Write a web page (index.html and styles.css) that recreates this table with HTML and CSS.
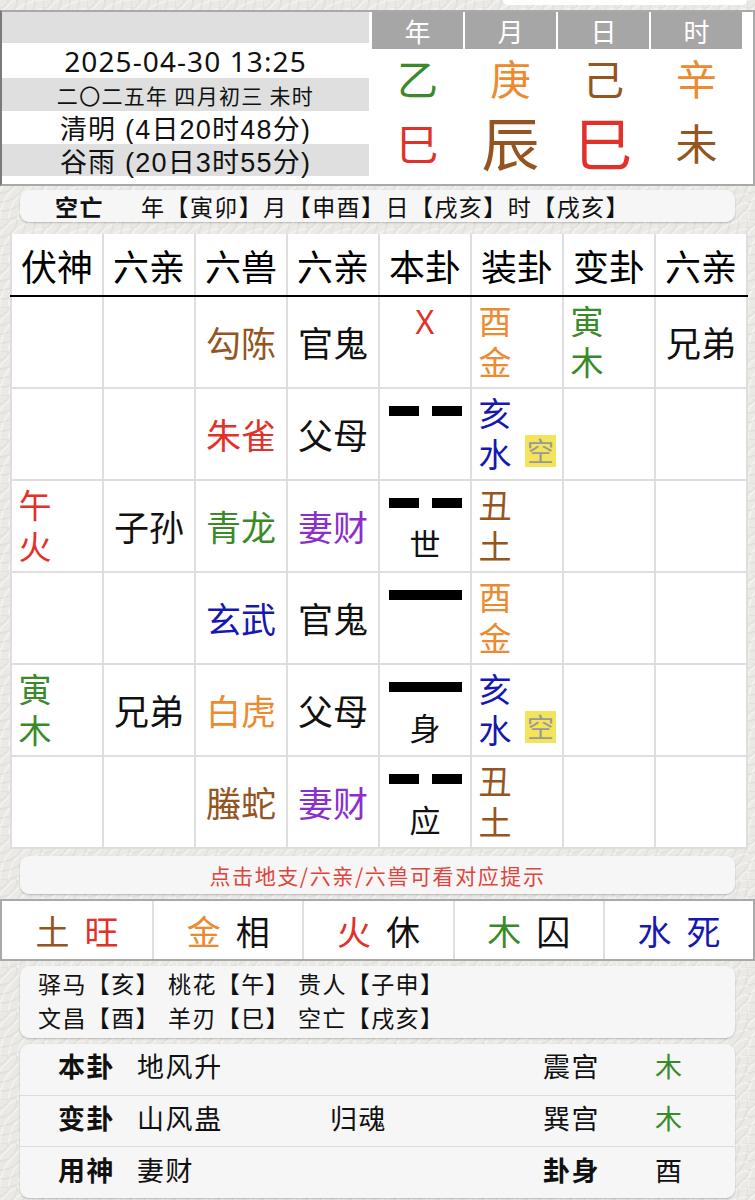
FILE: index.html
```html
<!DOCTYPE html>
<html lang="zh">
<head>
<meta charset="utf-8">
<link rel="stylesheet" href="styles.css">
</head>
<body>
<div class="strip"><div class="peek"></div></div>
<section class="top">
  <div class="info">
    <div class="irow gray bar"></div>
    <div class="irow date">2025-04-30 13:25</div>
    <div class="irow gray lunar">二〇二五年 四月初三 未时</div>
    <div class="irow term">清明 (4日20时48分)</div>
    <div class="irow gray term">谷雨 (20日3时55分)</div>
  </div>
  <div class="pillars">
    <div class="phead"><span>年</span><span>月</span><span>日</span><span>时</span></div>
    <div class="prow stems"><span class="c-green">乙</span><span class="c-orange">庚</span><span class="c-brown">己</span><span class="c-orange">辛</span></div>
    <div class="prow branches"><span class="c-red">巳</span><span class="c-brown big">辰</span><span class="c-red big">巳</span><span class="c-brown">未</span></div>
  </div>
</section>

<div class="card kong"><b>空亡</b><span>年【寅卯】月【申酉】日【戌亥】时【戌亥】</span></div>

<table class="gua">
  <colgroup><col><col><col><col><col><col><col><col></colgroup>
  <thead>
    <tr><th>伏神</th><th>六亲</th><th class="bl">六兽</th><th class="bl">六亲</th><th>本卦</th><th>装卦</th><th class="bl">变卦</th><th>六亲</th></tr>
  </thead>
  <tbody>
    <tr>
      <td></td><td></td>
      <td class="bl c-brown">勾陈</td>
      <td class="bl">官鬼</td>
      <td class="yao"><div class="x">X</div></td>
      <td class="zhuang"><div class="stack c-orange">酉金</div></td>
      <td class="bl side"><div class="stack c-green">寅木</div></td>
      <td>兄弟</td>
    </tr>
    <tr>
      <td></td><td></td>
      <td class="bl c-red">朱雀</td>
      <td class="bl">父母</td>
      <td class="yao"><div class="yin"><i></i><i></i></div></td>
      <td class="zhuang"><div class="zwrap"><div class="stack c-blue">亥水</div><span class="empty">空</span></div></td>
      <td class="bl"></td>
      <td></td>
    </tr>
    <tr>
      <td class="side"><div class="stack c-red">午火</div></td>
      <td>子孙</td>
      <td class="bl c-green">青龙</td>
      <td class="bl c-purple">妻财</td>
      <td class="yao"><div class="yin"><i></i><i></i></div><div class="mark">世</div></td>
      <td class="zhuang"><div class="stack c-brown">丑土</div></td>
      <td class="bl"></td>
      <td></td>
    </tr>
    <tr>
      <td></td><td></td>
      <td class="bl c-blue">玄武</td>
      <td class="bl">官鬼</td>
      <td class="yao"><div class="yang"></div></td>
      <td class="zhuang"><div class="stack c-orange">酉金</div></td>
      <td class="bl"></td>
      <td></td>
    </tr>
    <tr>
      <td class="side"><div class="stack c-green">寅木</div></td>
      <td>兄弟</td>
      <td class="bl c-orange">白虎</td>
      <td class="bl">父母</td>
      <td class="yao"><div class="yang"></div><div class="mark">身</div></td>
      <td class="zhuang"><div class="zwrap"><div class="stack c-blue">亥水</div><span class="empty">空</span></div></td>
      <td class="bl"></td>
      <td></td>
    </tr>
    <tr>
      <td></td><td></td>
      <td class="bl c-brown">螣蛇</td>
      <td class="bl c-purple">妻财</td>
      <td class="yao"><div class="yin"><i></i><i></i></div><div class="mark">应</div></td>
      <td class="zhuang"><div class="stack c-brown">丑土</div></td>
      <td class="bl"></td>
      <td></td>
    </tr>
  </tbody>
</table>

<div class="card hint">点击地支/六亲/六兽可看对应提示</div>

<div class="wuxing">
  <div class="wx"><span class="c-brown">土</span><span class="c-red">旺</span></div>
  <div class="wx"><span class="c-orange">金</span><span>相</span></div>
  <div class="wx"><span class="c-red">火</span><span>休</span></div>
  <div class="wx"><span class="c-green">木</span><span>囚</span></div>
  <div class="wx"><span class="c-blue">水</span><span class="c-blue">死</span></div>
</div>

<div class="card shensha">
  <div class="ssrow"><span>驿马【亥】</span><span>桃花【午】</span><span>贵人【子申】</span></div>
  <div class="ssrow"><span>文昌【酉】</span><span>羊刃【巳】</span><span>空亡【戌亥】</span></div>
</div>

<div class="card guainfo">
  <div class="grow"><b>本卦</b><span>地风升</span><span></span><span>震宫</span><span class="c-green">木</span></div>
  <div class="grow"><b>变卦</b><span>山风蛊</span><span>归魂</span><span>巽宫</span><span class="c-green">木</span></div>
  <div class="grow"><b>用神</b><span>妻财</span><span></span><b>卦身</b><span>酉</span></div>
</div>
</body>
</html>
```

FILE: styles.css
```css
* { box-sizing: border-box; }

html, body {
  margin: 0;
  padding: 0;
}

body {
  width: 755px;
  height: 1200px;
  overflow: hidden;
  font-family: "Noto Sans CJK SC", "Noto Sans", sans-serif;
  color: #111;
  background-color: #ebe9e5;
  background-image:
    repeating-radial-gradient(circle at 0 0, rgba(255,255,255,0) 0 7px, rgba(0,0,0,0.035) 7px 9px),
    repeating-radial-gradient(circle at 100% 100%, rgba(255,255,255,0) 0 7px, rgba(255,255,255,0.35) 7px 9px);
  background-size: 44px 44px, 44px 44px;
}

.c-green { color: #3a8a29; }
.c-orange { color: #ec8a2f; }
.c-brown { color: #955520; }
.c-red { color: #e2312a; }
.c-blue { color: #1717b2; }
.c-purple { color: #8a2ecc; }

/* top strip */
.strip {
  height: 10px;
  padding-left: 503px;
}
.peek {
  width: 244px;
  height: 5px;
  background: #fff;
  border-radius: 0 0 10px 10px;
}

/* top panel */
.top {
  display: flex;
  width: 755px;
  height: 176px;
  border: 2px solid #a9a9a9;
  border-left-color: #7a7a7a;
  background: #fff;
}
.info {
  width: 367px;
  display: flex;
  flex-direction: column;
}
.irow {
  display: flex;
  align-items: center;
  justify-content: center;
  white-space: nowrap;
}
.gray { background: #dfdfdf; }
.bar { height: 31px; }
.date {
  height: 35px;
  font-family: "Noto Sans", "Liberation Sans", sans-serif;
  font-size: 28px;
  letter-spacing: 1.1px;
}
.lunar {
  height: 33px;
  font-size: 21px;
  letter-spacing: 1.3px;
}
.term {
  height: 33px;
  font-family: "Liberation Sans", "Noto Sans CJK SC", sans-serif;
  font-size: 27px;
  letter-spacing: 1.2px;
}
.info .term:last-child { height: 32px; }

.pillars {
  margin-left: 3px;
  flex: 1;
  padding-right: 11px;
  display: flex;
  flex-direction: column;
}
.phead {
  display: grid;
  grid-template-columns: repeat(4, 1fr);
  gap: 2px;
  height: 36px;
}
.phead span {
  background: #a6a6a6;
  color: #fff;
  font-size: 26px;
  display: flex;
  align-items: center;
  justify-content: center;
}
.prow {
  display: grid;
  grid-template-columns: repeat(4, 1fr);
  gap: 2px;
  font-family: "Liberation Sans", "Noto Sans CJK SC", sans-serif;
}
.prow span {
  display: flex;
  align-items: center;
  justify-content: center;
  line-height: 1;
}
.stems { height: 66px; font-size: 41px; }
.branches { height: 64px; font-size: 42px; }
.branches .big { font-size: 58px; }

/* cards */
.card {
  background: #f6f6f6;
  border-radius: 9px;
  box-shadow: 0 1px 2px rgba(0,0,0,0.22);
  margin-left: 20px;
  width: 715px;
}
.kong {
  margin-top: 4px;
  height: 32px;
  display: flex;
  align-items: center;
  padding-left: 35px;
  font-size: 23px;
  white-space: nowrap;
}
.kong b {
  font-weight: 700;
  letter-spacing: 1.5px;
  margin-right: 37px;
}
.kong span { letter-spacing: 1.45px; }

/* main table */
.gua {
  margin-top: 12px;
  margin-left: 10px;
  width: 736px;
  table-layout: fixed;
  border-collapse: collapse;
  background: #fff;
}
.gua col { width: 92px; }
.gua th, .gua td {
  border: 2px solid #dedede;
  padding: 0;
  text-align: center;
  vertical-align: middle;
  font-weight: 400;
}
.gua th {
  height: 62px;
  font-size: 36px;
  border-top: none;
  border-bottom: 2px solid #000;
  color: #000;
}
.gua td {
  height: 92px;
  font-size: 35px;
  line-height: 1.1;
}
.gua .bl { border-left: 2px solid #000; }

.gua td.side {
  text-align: left;
  padding-left: 6px;
}
.stack {
  writing-mode: vertical-rl;
  text-orientation: upright;
  font-size: 33px;
  line-height: 1;
  letter-spacing: 8px;
  height: 82px;
  width: 33px;
  padding-top: 4px;
  white-space: nowrap;
}
.gua td.zhuang {
  text-align: left;
  padding-left: 6px;
}
.zwrap {
  display: flex;
  align-items: flex-end;
}
.empty {
  margin-left: 14px;
  margin-bottom: 8px;
  width: 31px;
  height: 32px;
  background: #f4e45b;
  color: #999;
  font-size: 27px;
  line-height: 32px;
  text-align: center;
}

.gua td.yao {
  vertical-align: top;
  padding-top: 17px;
}
.x {
  margin-top: -10px;
  font-family: "Noto Sans", "Liberation Sans", sans-serif;
  font-size: 32px;
  line-height: 36px;
  color: #e2312a;
}
.yang {
  width: 73px;
  height: 10px;
  margin: 0 auto;
  background: #000;
}
.yin {
  width: 73px;
  height: 10px;
  margin: 0 auto;
  display: flex;
  justify-content: space-between;
}
.yin i {
  width: 30px;
  height: 10px;
  background: #000;
}
.mark {
  margin-top: 17px;
  font-size: 31px;
  line-height: 36px;
}

/* hint */
.hint {
  margin-top: 7px;
  height: 38px;
  display: flex;
  align-items: center;
  justify-content: center;
  color: #e0443c;
  font-size: 21px;
  letter-spacing: 1.6px;
}

/* wuxing */
.wuxing {
  margin-top: 5px;
  width: 755px;
  height: 62px;
  border: 2px solid #a9a9a9;
  background: #fff;
  display: grid;
  grid-template-columns: repeat(5, 1fr);
}
.wx {
  display: flex;
  align-items: center;
  justify-content: center;
  gap: 15px;
  font-size: 34px;
  border-left: 2px solid #e0e0e0;
}
.wx:first-child { border-left: none; }

/* shensha */
.shensha {
  margin-top: 5px;
  height: 72px;
  padding: 0 0 0 18px;
  font-size: 23px;
  letter-spacing: 1.4px;
}
.ssrow {
  display: flex;
  gap: 8px;
  line-height: 34px;
  white-space: nowrap;
}

/* gua info */
.guainfo {
  margin-top: 6px;
  height: 154px;
  display: flex;
  flex-direction: column;
}
.grow {
  flex: 1;
  display: grid;
  grid-template-columns: 79px 193px 213px 112px 1fr;
  align-items: center;
  padding-left: 38px;
  padding-bottom: 7px;
  font-size: 27px;
  letter-spacing: 1.6px;
  border-top: 1px solid #dcdcdc;
}
.grow:first-child { border-top: none; }
.grow b { font-weight: 700; }
```
